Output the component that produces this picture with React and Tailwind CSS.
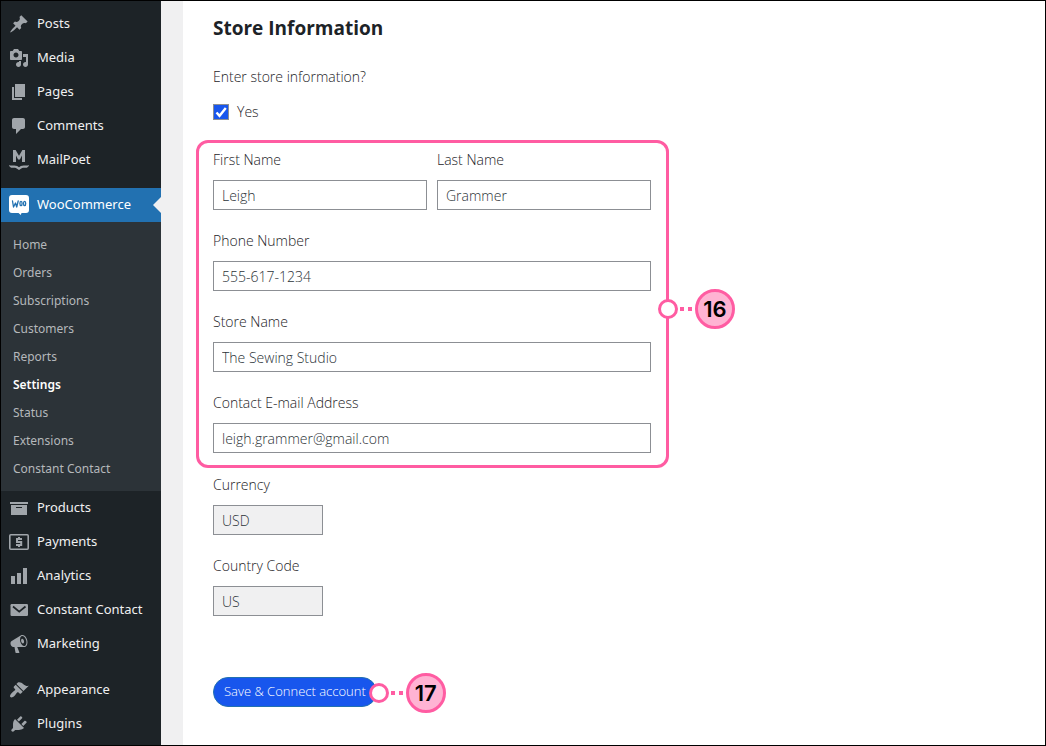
import { useState } from 'react';

const icons = {
  posts: 'M10.44 3.02l1.82-1.82 6.36 6.35-1.83 1.82c-1.05-.68-2.48-.57-3.41.36l-.75.75c-.92.93-1.04 2.35-.35 3.41l-1.83 1.82-2.41-2.41-2.8 2.79c-.42.42-3.38 2.71-3.8 2.29s1.86-3.39 2.28-3.81l2.79-2.79L4.1 9.36l1.83-1.82c1.05.69 2.48.57 3.4-.36l.75-.75c.93-.92 1.05-2.35.36-3.41z',
  media: 'M13 11V4c0-.55-.45-1-1-1h-1.67L9 1H5L3.67 3H2c-.55 0-1 .45-1 1v7c0 .55.45 1 1 1h10c.55 0 1-.45 1-1zM7 4.5c1.38 0 2.5 1.12 2.5 2.5S8.38 9.5 7 9.5 4.5 8.38 4.5 7 5.62 4.5 7 4.5zM14 6h5v10.5c0 1.38-1.12 2.5-2.5 2.5S14 17.88 14 16.5s1.12-2.5 2.5-2.5c.17 0 .34.02.5.05V9h-3V6zm-4 8.05V13h2v3.5c0 1.38-1.12 2.5-2.5 2.5S7 17.88 7 16.5 8.12 14 9.5 14c.17 0 .34.02.5.05z',
  pages: 'M6 15V2h10v13H6zm-1 1h8v2H3V5h2v11z',
  comments: 'M5 2h9c1.1 0 2 .9 2 2v7c0 1.1-.9 2-2 2h-2l-5 5v-5H5c-1.1 0-2-.9-2-2V4c0-1.1.9-2 2-2z',
  products: 'M19 4v2H1V4h18zM2 7h16v10H2V7zm11 3V9H7v1h6z',
  analytics: 'M18 18V2h-4v16h4zm-6 0V7H8v11h4zm-6 0v-8H2v8h4z',
  marketing: 'M18.15 5.94c.46 1.62.38 3.22-.02 4.48-.42 1.28-1.26 2.18-2.3 2.48-.16.06-.26.06-.4.06-.06.02-.12.02-.18.02-.06.02-.14.02-.22.02h-6.8l2.22 5.5c.02.14-.06.26-.14.34-.08.1-.24.16-.34.16H6.95c-.1 0-.26-.06-.34-.16-.08-.08-.16-.2-.14-.34l-1-5.5H4.25l-.02-.02c-.5.06-1.08-.18-1.54-.62s-.88-1.08-1.06-1.88c-.24-.8-.2-1.56-.02-2.2.18-.62.58-1.08 1.06-1.3l.02-.02 9-5.4c.1-.06.18-.1.24-.16.06-.04.14-.08.24-.12.16-.08.28-.12.5-.18 1.04-.3 2.24.1 3.22.98s1.84 2.24 2.26 3.86zm-2.58 5.98h-.02c.4-.1.74-.34 1.04-.7.58-.7.86-1.76.86-3.04 0-.64-.1-1.3-.28-1.98-.34-1.36-1.02-2.5-1.78-3.24s-1.68-1.1-2.46-.88c-.82.22-1.4.96-1.7 2-.32 1.04-.28 2.36.06 3.72.38 1.36 1 2.5 1.8 3.24.78.74 1.62 1.1 2.48.88zm-2.54-7.08c.22-.04.42-.02.62.04.38.16.76.48 1.02 1s.42 1.2.42 1.78c0 .3-.04.56-.12.8-.18.48-.44.84-.86.94-.34.1-.8-.06-1.14-.4s-.64-.86-.78-1.5c-.18-.62-.12-1.24.02-1.72s.48-.84.82-.94z',
  appearance: 'M14.48 11.06L7.41 3.99l1.5-1.5c.5-.56 2.3-.47 3.51.32 1.21.8 1.43 1.28 2.91 2.1 1.18.64 2.45 1.26 4.45.85zm-.71.71L6.7 4.7 4.93 6.47c-.39.39-.39 1.02 0 1.41l1.06 1.06c.39.39.39 1.03 0 1.42-.6.6-1.43 1.11-2.21 1.69-.35.26-.7.53-1.01.84C1.43 14.23.4 16.08 1.4 17.07c.99 1 2.84-.03 4.18-1.36.31-.31.58-.66.85-1.02.57-.78 1.08-1.61 1.69-2.21.39-.39 1.02-.39 1.41 0l1.06 1.06c.39.39 1.02.39 1.41 0z',
  plugins: 'M13.11 4.36L9.87 7.6 8 5.73l3.24-3.24c.35-.34 1.05-.2 1.56.32.52.51.66 1.21.31 1.55zm-8 1.77l.91-1.12 9.01 9.01-1.19.84c-.71.71-2.63 1.16-3.82 1.16H6.14L4.9 17.26c-.59.59-1.54.59-2.12 0-.59-.58-.59-1.53 0-2.12l1.24-1.24v-3.88c0-1.13.4-3.19 1.09-3.89zm7.26 3.97l3.24-3.24c.34-.35 1.04-.21 1.55.31.52.51.66 1.21.31 1.55l-3.24 3.25z',
};

const subItems = [
  'Home',
  'Orders',
  'Subscriptions',
  'Customers',
  'Reports',
  'Settings',
  'Status',
  'Extensions',
  'Constant Contact',
];

function MenuIcon({ name }) {
  // these are strokes and mixed shapes, everything else is one path
  if (name === 'mailpoet') {
    return (
      <svg viewBox="0 0 20 20" className="h-5 w-5 shrink-0" fill="#a0a5aa" aria-hidden="true">
        <path d="M4 12V0h2.600L10 5.800 13.400 0H16v12h-3V5.600L10.900 9.500H9.100L7 5.600V12z" />
        <path d="M0 15c1 .5 2 .6 3.500.5 2.200-.2 3.500-.1 4.700.6L10 17.200l1.800-1.100c1.200-.7 2.500-.8 4.700-.6 1.500.1 2.500 0 3.500-.5-.3 1.900-1.600 2.800-3.500 2.800-2.100 0-3 0-4.200.7L10 20l-2.300-1.500c-1.200-.7-2.100-.7-4.200-.7C1.600 17.800.3 16.900 0 15z" />
      </svg>
    );
  }
  if (name === 'payments') {
    return (
      <svg viewBox="0 0 20 20" className="h-5 w-5 shrink-0" fill="none" stroke="#a0a5aa" aria-hidden="true">
        <rect x="0.800" y="2.800" width="18.400" height="14.400" rx="1" strokeWidth="1.600" />
        <path d="M13 7H8v3h4.200v3H7M10 5v2M10 13v2" strokeWidth="2" />
      </svg>
    );
  }
  if (name === 'email') {
    return (
      <svg viewBox="0 0 20 20" className="h-5 w-5 shrink-0" aria-hidden="true">
        <rect x="1.500" y="4" width="17.500" height="12" rx="1.200" fill="#a0a5aa" />
        <path d="M4 6.500l6.200 5.200 6.300-5.200" fill="none" stroke="#1d2327" strokeWidth="1.700" />
      </svg>
    );
  }
  if (name === 'woo') {
    return (
      <svg viewBox="0 0 20 20" className="h-5 w-5 shrink-0" aria-hidden="true">
        <path d="M3 0h14a3 3 0 0 1 3 3v12a3 3 0 0 1-3 3h-4.500l-.7 2-2.300-2H3a3 3 0 0 1-3-3V3a3 3 0 0 1 3-3z" fill="#fff" />
        <g fill="none" stroke="#2271b1" strokeWidth="1.300" strokeLinecap="round" strokeLinejoin="round">
          <path d="M3.500 6l1 6 2-4 1.200 4L9.200 6" />
          <ellipse cx="12" cy="8.500" rx="1.100" ry="2.100" />
          <ellipse cx="15.600" cy="8.500" rx="1.100" ry="2.100" />
        </g>
      </svg>
    );
  }
  return (
    <svg viewBox="0 0 20 20" className="h-5 w-5 shrink-0" fill="#a0a5aa" aria-hidden="true">
      <path d={icons[name]} />
    </svg>
  );
}

function MenuItem({ icon, label }) {
  return (
    <li>
      <a href="#" className="flex h-[34px] items-center gap-2 pl-2 text-[13px] text-[#f0f0f1] hover:text-[#72aee6]">
        <MenuIcon name={icon} />
        <span className="whitespace-nowrap">{label}</span>
      </a>
    </li>
  );
}

function Sidebar() {
  return (
    <nav className="w-40 shrink-0 bg-[#1d2327] pt-1.5 font-['Noto_Sans',sans-serif]">
      <ul>
        <MenuItem icon="posts" label="Posts" />
        <MenuItem icon="media" label="Media" />
        <MenuItem icon="pages" label="Pages" />
        <MenuItem icon="comments" label="Comments" />
        <MenuItem icon="mailpoet" label="MailPoet" />
        <li className="mt-[11px]">
          <a href="#" className="flex h-[34px] items-center gap-2 bg-[#2271b1] pl-2 text-[13px] text-white">
            <MenuIcon name="woo" />
            <span>WooCommerce</span>
            <svg viewBox="0 0 8 16" className="ml-auto h-4 w-2" fill="#f0f0f1" aria-hidden="true">
              <path d="M8 0v16L0 8z" />
            </svg>
          </a>
          <ul className="bg-[#2c3338] pt-[9px] pb-2">
            {subItems.map((item) => (
              <li key={item}>
                <a
                  href="#"
                  className={
                    item === 'Settings'
                      ? 'flex h-7 items-center pl-3 text-xs font-semibold text-white'
                      : 'flex h-7 items-center pl-3 text-xs text-[#b5b8bb]'
                  }
                >
                  {item}
                </a>
              </li>
            ))}
          </ul>
        </li>
        <MenuItem icon="products" label="Products" />
        <MenuItem icon="payments" label="Payments" />
        <MenuItem icon="analytics" label="Analytics" />
        <MenuItem icon="email" label="Constant Contact" />
        <MenuItem icon="marketing" label="Marketing" />
      </ul>
      <ul className="mt-3">
        <MenuItem icon="appearance" label="Appearance" />
        <MenuItem icon="plugins" label="Plugins" />
      </ul>
    </nav>
  );
}

function Field({ id, label, value, onChange, type = 'text' }) {
  return (
    <div className="flex min-w-0 flex-1 flex-col gap-[10px]">
      <label htmlFor={id} className="text-sm font-light">{label}</label>
      <input
        id={id}
        type={type}
        value={value}
        onChange={onChange}
        className="h-[30px] w-full border border-[#8c8f94] bg-white px-2 text-sm font-light text-[#2c3338]"
      />
    </div>
  );
}

function LockedField({ id, label, value }) {
  return (
    <div className="flex flex-col gap-[10px]">
      <label htmlFor={id} className="text-sm font-light">{label}</label>
      <input
        id={id}
        type="text"
        value={value}
        readOnly
        className="h-[30px] w-[110px] border border-[#8c8f94] bg-[#f0f0f1] px-2 text-sm font-light text-[#2c3338]"
      />
    </div>
  );
}

// ring, dotted line and numbered circle
function Step({ number }) {
  return (
    <div className="flex items-center">
      <span className="h-5 w-5 rounded-full border-3 border-[#ff5ca2] bg-white" />
      <span className="ml-[2px] h-1 w-1 bg-[#ff5ca2]" />
      <span className="ml-1 h-1 w-1 bg-[#ff5ca2]" />
      <span className="ml-[3px] flex h-10 w-10 items-center justify-center rounded-full border-3 border-[#ff5ca2] bg-[#ffb3d3] font-['Inter',sans-serif] text-[22px] font-semibold text-black">
        {number}
      </span>
    </div>
  );
}

export default function App() {
  const [enabled, setEnabled] = useState(true);
  const [store, setStore] = useState({
    first: 'Leigh',
    last: 'Grammer',
    phone: '555-617-1234',
    name: 'The Sewing Studio',
    email: 'leigh.grammer@gmail.com',
  });

  const update = (key) => (e) => setStore({ ...store, [key]: e.target.value });

  return (
    <div className="flex min-h-screen border border-black bg-[#f0f0f1]">
      <Sidebar />
      <main className="ml-[22px] flex-1 bg-white pt-[13px] pr-8 pb-[38px] pl-[30px] font-['Open_Sans',sans-serif] text-[#1d2327]">
        <form className="max-w-[438px]" onSubmit={(e) => e.preventDefault()}>
          <h2 className="text-[19px] leading-7 font-bold">Store Information</h2>
          <p className="mt-[25px] text-sm font-light">Enter store information?</p>
          <label className="mt-[15px] flex items-center gap-2 text-sm font-light">
            <span className="relative flex h-4 w-4">
              <input
                type="checkbox"
                checked={enabled}
                onChange={(e) => setEnabled(e.target.checked)}
                className="peer h-4 w-4 appearance-none border border-[#8c8f94] bg-white checked:bg-[#1856ed]"
              />
              <svg viewBox="0 0 16 16" className="pointer-events-none absolute inset-0 hidden peer-checked:block" fill="none" stroke="#fff" aria-hidden="true">
                <path d="M3.500 8.500l3 3.300L12.800 4" strokeWidth="2.400" />
              </svg>
            </span>
            Yes
          </label>

          <div className="relative mt-[18px] -mr-[18px] -ml-[17px] flex flex-col gap-[21px] rounded-xl border-3 border-[#ff5ca2] pt-[7px] pr-[15px] pb-3 pl-[14px]">
            <div className="flex gap-[10px]">
              <Field id="first" label="First Name" value={store.first} onChange={update('first')} />
              <Field id="last" label="Last Name" value={store.last} onChange={update('last')} />
            </div>
            <Field id="phone" label="Phone Number" value={store.phone} onChange={update('phone')} />
            <Field id="name" label="Store Name" value={store.name} onChange={update('name')} />
            <Field id="email" label="Contact E-mail Address" value={store.email} onChange={update('email')} />
            <div className="absolute top-[146px] left-full -ml-2">
              <Step number="16" />
            </div>
          </div>

          <div className="mt-[7px] flex flex-col gap-[21px]">
            <LockedField id="currency" label="Currency" value="USD" />
            <LockedField id="country" label="Country Code" value="US" />
          </div>

          <div className="relative mt-[61px] flex w-fit">
            <button type="submit" className="h-[30px] rounded-full border border-[#2271b1] bg-[#1856ed] px-[10px] text-[13px] font-light whitespace-nowrap text-white">
              Save &amp; Connect account
            </button>
            <div className="absolute -top-1 left-full -ml-2">
              <Step number="17" />
            </div>
          </div>
        </form>
      </main>
    </div>
  );
}
